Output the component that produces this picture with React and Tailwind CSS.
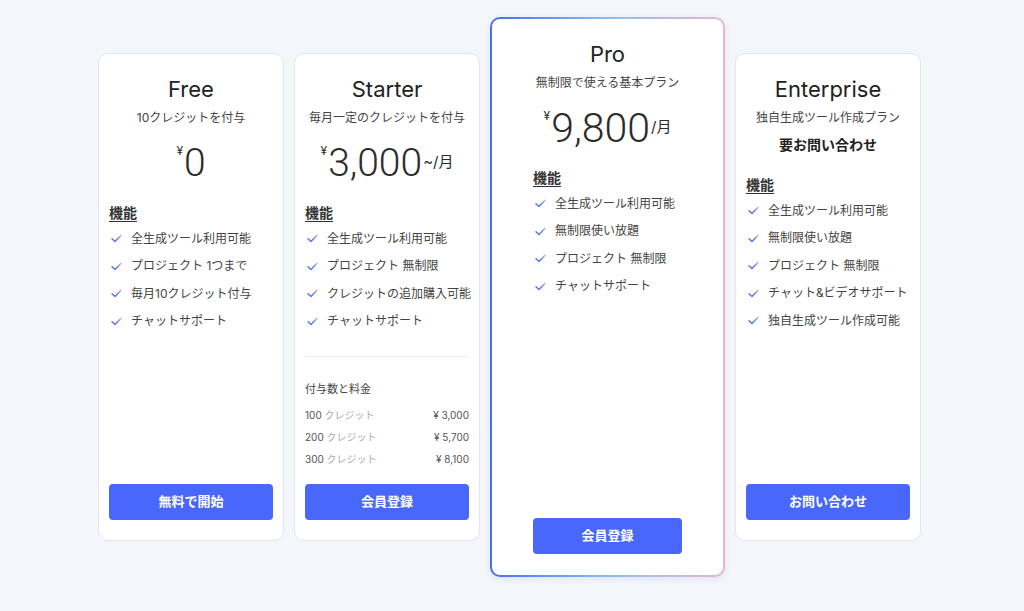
import React from "react";

const CheckIcon = () => (
  <svg width="11" height="9" viewBox="0 0 11 9" className="shrink-0">
    <defs>
      <linearGradient id="chk" x1="0" y1="1" x2="1" y2="0">
        <stop offset="0%" stopColor="#4a6cf7" />
        <stop offset="55%" stopColor="#5f7cf5" />
        <stop offset="100%" stopColor="#eaa9c0" />
      </linearGradient>
    </defs>
    <path d="M1 4.8 L4 7.6 L10 1.2" fill="none" stroke="url(#chk)" strokeWidth="1.4" strokeLinecap="round" strokeLinejoin="round" />
  </svg>
);

const Features = ({ items }) => (
  <div>
    <h3 className="text-[14px] leading-[20px] font-bold text-[#333] underline underline-offset-[3px]">機能</h3>
    <ul className="mt-[2px]">
      {items.map((t) => (
        <li key={t} className="h-[27.5px] flex items-center gap-[9px] pl-[2px] text-[12px] text-[#444] whitespace-nowrap">
          <CheckIcon />
          <span>{t}</span>
        </li>
      ))}
    </ul>
  </div>
);

const Price = ({ value, suffix, size = "text-[39px]" }) => (
  <div className="flex justify-center items-center h-[44px] text-[#2b2b2b]">
    <span className="self-start text-[12px] leading-none mt-[4px] mr-[1px]">¥</span>
    <span className={`${size} leading-none font-light font-[Roboto,sans-serif]`}>{value}</span>
    {suffix && <span className="text-[15px] leading-none ml-[1px] -mt-[3px]">{suffix}</span>}
  </div>
);

const Button = ({ children, className = "" }) => (
  <button className={`h-[36px] rounded-[4px] bg-[#4968fb] text-white text-[13px] font-bold ${className}`}>
    {children}
  </button>
);

const Header = ({ title, sub }) => (
  <div className="text-center">
    <h2 className="text-[22px] leading-[28px] text-[#222] font-normal">{title}</h2>
    <p className="text-[12px] leading-[18px] text-[#444] mt-[6px]">{sub}</p>
  </div>
);

const SmallCard = ({ children }) => (
  <div className="w-[186px] h-[488px] bg-white border border-[#e2e6ec] rounded-[10px] px-[10px] pt-[21px] pb-[20px] flex flex-col">
    {children}
  </div>
);

const credits = [
  ["100", "¥ 3,000"],
  ["200", "¥ 5,700"],
  ["300", "¥ 8,100"],
];

export default function App() {
  return (
    <div className="min-h-[611px] bg-[#f3f6fa] flex justify-center items-start pt-[17px] pr-[5px] font-[Inter,'Noto_Sans_CJK_JP',sans-serif]">
      <div className="flex items-center gap-[10px]">
        {/* Free */}
        <SmallCard>
          <Header title="Free" sub="10クレジットを付与" />
          <div className="mt-[14px]">
            <Price value="0" />
          </div>
          <div className="mt-[18px]">
            <Features items={["全生成ツール利用可能", "プロジェクト 1つまで", "毎月10クレジット付与", "チャットサポート"]} />
          </div>
          <Button className="mt-auto w-full">無料で開始</Button>
        </SmallCard>

        {/* Starter */}
        <SmallCard>
          <Header title="Starter" sub="毎月一定のクレジットを付与" />
          <div className="mt-[14px]">
            <Price value="3,000" suffix="~/月" />
          </div>
          <div className="mt-[18px]">
            <Features items={["全生成ツール利用可能", "プロジェクト 無制限", "クレジットの追加購入可能", "チャットサポート"]} />
          </div>
          <div className="mt-[21px] border-t border-[#eceef2]" />
          <p className="mt-[24px] text-[11px] leading-[16px] text-[#444]">付与数と料金</p>
          <div className="mt-[7px]">
            {credits.map(([n, p]) => (
              <div key={n} className="h-[22px] flex items-center justify-between text-[10px]">
                <span className="text-[#555]">
                  {n} <span className="text-[#aaa]">クレジット</span>
                </span>
                <span className="text-[#555]">{p}</span>
              </div>
            ))}
          </div>
          <Button className="mt-auto w-full">会員登録</Button>
        </SmallCard>

        {/* Pro */}
        <div className="w-[235px] h-[560px] rounded-[10px] p-[2px] bg-linear-to-r from-[#4a6cf7] via-[#8cbcf0] to-[#ebb6c3] shadow-[0_2px_6px_rgba(74,108,247,0.12)]">
          <div className="h-full bg-white rounded-[8px] px-[41px] pt-[21px] pb-[21px] flex flex-col">
            <Header title="Pro" sub="無制限で使える基本プラン" />
            <div className="mt-[14px]">
              <Price value="9,800" suffix="/月" size="text-[41px]" />
            </div>
            <div className="mt-[18px]">
              <Features items={["全生成ツール利用可能", "無制限使い放題", "プロジェクト 無制限", "チャットサポート"]} />
            </div>
            <Button className="mt-auto w-full">会員登録</Button>
          </div>
        </div>

        {/* Enterprise */}
        <SmallCard>
          <Header title="Enterprise" sub="独自生成ツール作成プラン" />
          <p className="text-center text-[14px] leading-[20px] font-bold text-[#222] mt-[8px]">要お問い合わせ</p>
          <div className="mt-[20px]">
            <Features items={["全生成ツール利用可能", "無制限使い放題", "プロジェクト 無制限", "チャット&ビデオサポート", "独自生成ツール作成可能"]} />
          </div>
          <Button className="mt-auto w-full">お問い合わせ</Button>
        </SmallCard>
      </div>
    </div>
  );
}
